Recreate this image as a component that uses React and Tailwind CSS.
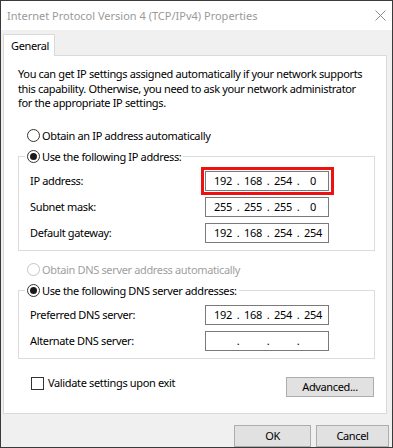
import React from 'react';

const Radio = ({ checked, disabled, label }) => (
  <span className="flex items-center h-[16px]">
    <span
      className={`flex items-center justify-center w-[13px] h-[13px] rounded-full border bg-white ${
        disabled ? 'border-[#c4c4c4]' : 'border-[#333333]'
      }`}
    >
      {checked && <span className="w-[7px] h-[7px] rounded-full bg-[#1a1a1a]" />}
    </span>
    <span className={`ml-[2px] ${disabled ? 'text-[#a0a0a0]' : 'text-black'}`}>{label}</span>
  </span>
);

const IpBox = ({ value, highlight }) => {
  const parts = value ? value.split('.') : ['', '', '', ''];
  return (
    <div className="relative">
      {highlight && (
        <div className="absolute -left-[4px] -top-[4px] -right-[5px] -bottom-[4px] border-[3px] border-[#ee1111]" />
      )}
      <div className="flex items-center w-[124px] h-[20px] border border-[#7a7a7a] bg-white pl-[5px]">
        {parts.map((p, i) => (
          <React.Fragment key={i}>
            <span className="w-[24px] text-center">{p}</span>
            {i < 3 && <span className="w-[6px] text-center">.</span>}
          </React.Fragment>
        ))}
      </div>
    </div>
  );
};

const Row = ({ label, value, highlight }) => (
  <div className="flex items-center h-[20px]">
    <span className="w-[175px]">{label}</span>
    <IpBox value={value} highlight={highlight} />
  </div>
);

const Group = ({ legend, children }) => (
  <fieldset className="w-[357px] border border-[#dcdcdc]">
    <legend className="ml-[6px] px-[2px] bg-white">
      <Radio checked label={legend} />
    </legend>
    <div className="flex flex-col gap-[6px] pl-[11px] pt-[6px] pb-[7px]">{children}</div>
  </fieldset>
);

const App = () => {
  return (
    <div
      className="w-[393px] h-[448px] border border-[#3a3a3a] bg-[#f0f0f0] flex flex-col text-[11px] tracking-[-0.35px] leading-[16px] text-black"
      style={{ fontFamily: '"Noto Sans", "Open Sans", sans-serif' }}
    >
      <div className="h-[29px] bg-white flex items-center justify-between pl-[6px] pr-[6px] shrink-0">
        <span className="text-[11px] tracking-normal text-[#9a9a9a]">Internet Protocol Version 4 (TCP/IPv4) Properties</span>
        <svg width="11" height="11" viewBox="0 0 11 11">
          <path d="M0.5 0.5 L10.5 10.5 M10.5 0.5 L0.5 10.5" stroke="#8a8a8a" strokeWidth="1" fill="none" />
        </svg>
      </div>

      <div className="pt-[4px] pl-[2px] flex">
        <div className="relative z-10 -mb-px h-[22px] w-[52px] border border-b-0 border-[#d9d9d9] bg-white pl-[7px] pt-[3px]">
          General
        </div>
      </div>

      <div className="ml-[2px] w-[384px] h-[359px] border border-[#d9d9d9] bg-white pl-[14px] flex flex-col">
        <p className="mt-[11px] leading-[14.5px]">
          You can get IP settings assigned automatically if your network supports
          <br />
          this capability. Otherwise, you need to ask your network administrator
          <br />
          for the appropriate IP settings.
        </p>

        <div className="mt-[17px] ml-[9px]">
          <Radio label="Obtain an IP address automatically" />
        </div>

        <div className="mt-[5px]">
          <Group legend="Use the following IP address:">
            <Row label="IP address:" value="192.168.254.0" highlight />
            <Row label="Subnet mask:" value="255.255.255.0" />
            <Row label="Default gateway:" value="192.168.254.254" />
          </Group>
        </div>

        <div className="mt-[11px] ml-[9px]">
          <Radio disabled label="Obtain DNS server address automatically" />
        </div>

        <div className="mt-[5px]">
          <Group legend="Use the following DNS server addresses:">
            <Row label="Preferred DNS server:" value="192.168.254.254" />
            <Row label="Alternate DNS server:" />
          </Group>
        </div>

        <div className="mt-[18px] w-[356px] flex justify-between items-start">
          <label className="ml-[13px] flex items-center h-[13px] gap-[4px]">
            <span className="w-[13px] h-[13px] border border-[#333333] bg-white" />
            <span>Validate settings upon exit</span>
          </label>
          <button className="w-[88px] h-[20px] border border-[#adadad] bg-[#e1e1e1]">Advanced...</button>
        </div>
      </div>

      <div className="mt-[11px] flex justify-end gap-[5px] pr-[3px]">
        <button className="w-[77px] h-[22px] border border-[#adadad] bg-[#e1e1e1]">OK</button>
        <button className="w-[73px] h-[22px] border border-[#adadad] bg-[#e1e1e1]">Cancel</button>
      </div>
    </div>
  );
};

export default App;
